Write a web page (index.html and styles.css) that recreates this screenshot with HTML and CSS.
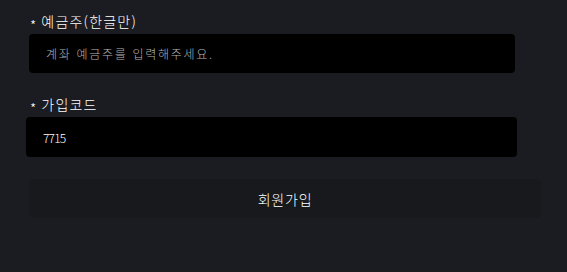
FILE: index.html
```html
<!DOCTYPE html>
<html lang="ko">
<head>
<meta charset="utf-8">
<title>회원가입</title>
<link rel="stylesheet" href="styles.css">
</head>
<body>
<form class="form">
  <div class="field">
    <label class="label"><span class="star">*</span> 예금주(한글만)</label>
    <input class="input" type="text" placeholder="계좌 예금주를 입력해주세요.">
  </div>
  <div class="field field-code">
    <label class="label"><span class="star">*</span> 가입코드</label>
    <input class="input input-wide" type="text" value="7715">
  </div>
  <button class="submit" type="button">회원가입</button>
</form>
</body>
</html>
```

FILE: styles.css
```css
html, body {
  margin: 0;
  padding: 0;
  background: #1b1c21;
  width: 567px;
  height: 272px;
  overflow: hidden;
  font-family: "Noto Sans CJK KR", "Noto Sans", sans-serif;
  font-weight: 300;
  color: #ffffff;
}

.form {
  display: flex;
  flex-direction: column;
  padding: 11px 0 0 29px;
  width: 512px;
}

.field {
  display: flex;
  flex-direction: column;
  gap: 3px;
}

.field-code {
  margin-top: 21px;
}

.label {
  font-size: 14px;
  line-height: 20px;
  height: 20px;
  color: #ffffff;
  padding-left: 1px;
  letter-spacing: 1.2px;
  font-weight: 300;
}

.star {
  display: inline-block;
  font-size: 14px;
  line-height: 14px;
  letter-spacing: 0;
  vertical-align: -4px;
}

.input {
  box-sizing: border-box;
  width: 486px;
  height: 39px;
  margin: 0;
  border: none;
  outline: none;
  border-radius: 4px;
  background: #000000;
  color: #ffffff;
  padding: 0 0 0 17px;
  font-family: "Noto Sans CJK KR", "Noto Sans", sans-serif;
  font-weight: 300;
  font-size: 12px;
}

.input::placeholder {
  color: #b4b4b4;
  letter-spacing: 1.7px;
}

.input-wide {
  width: 491px;
  height: 40px;
  margin-left: -3px;
  letter-spacing: -0.8px;
}

.submit {
  margin-top: 22px;
  width: 512px;
  height: 39px;
  border: none;
  border-radius: 5px;
  background: #18191d;
  color: #ffffff;
  font-family: "Noto Sans CJK KR", "Noto Sans", sans-serif;
  font-weight: 300;
  font-size: 14px;
  letter-spacing: 0.8px;
  padding: 0;
  cursor: pointer;
}
```
